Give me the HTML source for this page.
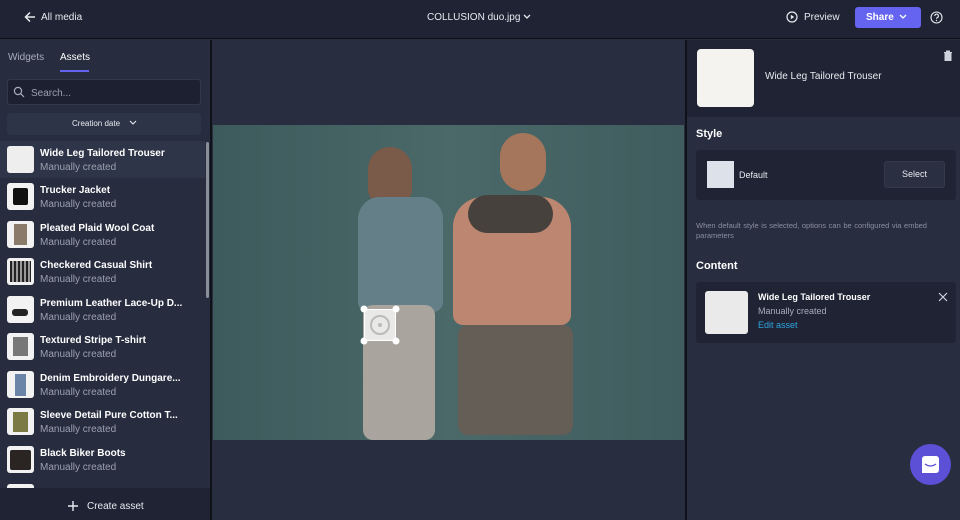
<!DOCTYPE html>
<html><head><meta charset="utf-8"><style>
*{box-sizing:border-box;margin:0;padding:0}
body{width:960px;height:520px;overflow:hidden;background:#282d40;font-family:"Liberation Sans",sans-serif;color:#e8eaf0;position:relative}
.top{position:absolute;left:0;top:0;width:960px;height:39px;background:#1f2333;border-bottom:1px solid #0e1018}
.abs{position:absolute}
.left{position:absolute;left:0;top:40px;width:212px;height:480px;background:#272c3f;border-right:2px solid #10121a}
.right{position:absolute;left:685px;top:40px;width:275px;height:480px;background:#282d40;border-left:2px solid #10121a}
.item{position:absolute;left:7px;width:200px;height:36px}
.item .th{position:absolute;left:0;top:2px;width:27px;height:27px;border-radius:3px;background:#f2f2f2}
.item .t{position:absolute;left:33px;top:4px;font-size:10px;font-weight:bold;color:#fff;white-space:nowrap}
.item .s{position:absolute;left:33px;top:18px;font-size:10px;color:#9ca1b0}
</style></head><body>
<div class="top">
 <svg class="abs" style="left:24px;top:11px" width="12" height="12" viewBox="0 0 12 12"><path d="M11 6H1.5M6 1.5L1.5 6 6 10.5" stroke="#e8eaf0" stroke-width="1.5" fill="none"/></svg>
 <div class="abs" style="left:41px;top:12px;font-size:10px">All media</div>
 <div class="abs" style="left:427px;top:12px;font-size:10px">COLLUSION duo.jpg</div>
 <svg class="abs" style="left:522px;top:13px" width="10" height="8"><path d="M2 2l3 3 3-3" stroke="#e8eaf0" stroke-width="1.3" fill="none"/></svg>
 <svg class="abs" style="left:786px;top:11px" width="12" height="12"><circle cx="6" cy="6" r="5" stroke="#e8eaf0" stroke-width="1.2" fill="none"/><path d="M4.8 3.8v4.4L8.2 6z" fill="#e8eaf0"/></svg>
 <div class="abs" style="left:804px;top:12px;font-size:10px">Preview</div>
 <div class="abs" style="left:855px;top:7px;width:66px;height:21px;background:#6464f0;border-radius:3px"></div>
 <div class="abs" style="left:866px;top:12px;font-size:10px;font-weight:bold;color:#fff">Share</div>
 <svg class="abs" style="left:898px;top:13px" width="10" height="8"><path d="M2 2l3 3 3-3" stroke="#fff" stroke-width="1.3" fill="none"/></svg>
 <svg class="abs" style="left:930px;top:11px" width="13" height="13"><circle cx="6.5" cy="6.5" r="5.5" stroke="#e8eaf0" stroke-width="1.1" fill="none"/><path d="M4.8 5a1.8 1.8 0 1 1 2.4 1.6c-.6.3-.7.6-.7 1.2" stroke="#e8eaf0" stroke-width="1.1" fill="none"/><circle cx="6.5" cy="9.5" r=".7" fill="#e8eaf0"/></svg>
</div>

<div class="left">
 <div class="abs" style="left:8px;top:12px;font-size:10px;color:#a8adbb">Widgets</div>
 <div class="abs" style="left:60px;top:12px;font-size:10px;color:#fff">Assets</div>
 <div class="abs" style="left:60px;top:30px;width:29px;height:2px;background:#6464f0"></div>
 <div class="abs" style="left:7px;top:39px;width:194px;height:26px;background:#1c2030;border:1px solid #33384a;border-radius:3px"></div>
 <svg class="abs" style="left:13px;top:46px" width="12" height="12"><circle cx="5" cy="5" r="3.6" stroke="#a8adbb" stroke-width="1.2" fill="none"/><path d="M7.7 7.7L11 11" stroke="#a8adbb" stroke-width="1.2"/></svg>
 <div class="abs" style="left:31px;top:48px;font-size:10px;color:#9ca1b0">Search...</div>
 <div class="abs" style="left:7px;top:73px;width:194px;height:22px;background:#2e3447;border-radius:3px"></div>
 <div class="abs" style="left:72px;top:79px;font-size:8px;color:#e8eaf0">Creation date</div>
 <svg class="abs" style="left:129px;top:80px" width="8" height="6"><path d="M1 1l3 3 3-3" stroke="#e8eaf0" stroke-width="1.1" fill="none"/></svg>
 <div class="abs" style="left:0;top:101px;width:205px;height:37px;background:#2f3548"></div>
 <div class="abs" style="left:206px;top:102px;width:3px;height:156px;background:#8a8e99;border-radius:2px"></div>
 <div class="item" style="top:104px"><div class="th" style="background:#eee"></div><div class="t">Wide Leg Tailored Trouser</div><div class="s">Manually created</div></div>
 <div class="item" style="top:141px"><div class="th"><div style="margin:5px 6px;width:15px;height:17px;background:#111;border-radius:2px"></div></div><div class="t">Trucker Jacket</div><div class="s">Manually created</div></div>
 <div class="item" style="top:179px"><div class="th"><div style="margin:3px 7px;width:13px;height:21px;background:#8a7a6a"></div></div><div class="t">Pleated Plaid Wool Coat</div><div class="s">Manually created</div></div>
 <div class="item" style="top:216px"><div class="th"><div style="margin:3px 3px;width:21px;height:21px;background:repeating-linear-gradient(90deg,#222 0 2px,#999 2px 4px)"></div></div><div class="t">Checkered Casual Shirt</div><div class="s">Manually created</div></div>
 <div class="item" style="top:254px"><div class="th"><div style="margin:13px 5px;width:16px;height:7px;background:#222;border-radius:3px"></div></div><div class="t">Premium Leather Lace-Up D...</div><div class="s">Manually created</div></div>
 <div class="item" style="top:291px"><div class="th"><div style="margin:4px 6px;width:15px;height:19px;background:#777"></div></div><div class="t">Textured Stripe T-shirt</div><div class="s">Manually created</div></div>
 <div class="item" style="top:329px"><div class="th"><div style="margin:3px 8px;width:11px;height:22px;background:#6a84a8"></div></div><div class="t">Denim Embroidery Dungare...</div><div class="s">Manually created</div></div>
 <div class="item" style="top:366px"><div class="th"><div style="margin:4px 6px;width:15px;height:20px;background:#7b7a44"></div></div><div class="t">Sleeve Detail Pure Cotton T...</div><div class="s">Manually created</div></div>
 <div class="item" style="top:404px"><div class="th"><div style="margin:4px 3px;width:21px;height:20px;background:#2a2522;border-radius:2px"></div></div><div class="t">Black Biker Boots</div><div class="s">Manually created</div></div>
 <div class="item" style="top:442px"><div class="th"></div></div>
 <div class="abs" style="left:0;top:448px;width:210px;height:32px;background:#1f2333"></div>
 <svg class="abs" style="left:67px;top:460px" width="12" height="12"><path d="M6 1v10M1 6h10" stroke="#e8eaf0" stroke-width="1.4"/></svg>
 <div class="abs" style="left:87px;top:461px;font-size:10px;color:#e8eaf0">Create asset</div>
</div>

<div class="abs" style="left:213px;top:125px;width:471px;height:315px;background:linear-gradient(90deg,#3d5a5c,#4b6969 50%,#3f5c5e);overflow:hidden">
 <div class="abs" style="left:155px;top:22px;width:44px;height:55px;background:#7a5a48;border-radius:22px 22px 12px 12px"></div>
 <div class="abs" style="left:145px;top:72px;width:85px;height:115px;background:#647f88;border-radius:22px 22px 10px 10px"></div>
 <div class="abs" style="left:150px;top:180px;width:72px;height:135px;background:#a9a59e;border-radius:10px"></div>
 <div class="abs" style="left:287px;top:8px;width:46px;height:58px;background:#a5765b;border-radius:23px"></div>
 <div class="abs" style="left:240px;top:72px;width:118px;height:128px;background:#bd8670;border-radius:30px 30px 10px 10px"></div>
 <div class="abs" style="left:255px;top:70px;width:85px;height:38px;background:#46413d;border-radius:20px"></div>
 <div class="abs" style="left:245px;top:200px;width:115px;height:110px;background:#645e57;border-radius:10px"></div>
 <div class="abs" style="left:151px;top:184px;width:32px;height:32px;background:#e9e9e7;border:1px solid #fff"></div>
 <svg class="abs" style="left:147px;top:180px" width="40" height="40"><circle cx="20" cy="20" r="9" stroke="#bbb" stroke-width="2" fill="none"/><circle cx="20" cy="20" r="2" fill="#bbb"/><circle cx="4" cy="4" r="3.5" fill="#fff"/><circle cx="36" cy="4" r="3.5" fill="#fff"/><circle cx="4" cy="36" r="3.5" fill="#fff"/><circle cx="36" cy="36" r="3.5" fill="#fff"/></svg>
</div>

<div class="right">
 <div class="abs" style="left:0;top:0;width:275px;height:77px;background:#1f2333"></div>
 <div class="abs" style="left:10px;top:9px;width:57px;height:58px;background:#f4f3ef;border-radius:4px"></div>
 <div class="abs" style="left:78px;top:31px;font-size:10px">Wide Leg Tailored Trouser</div>
 <svg class="abs" style="left:256px;top:10px" width="10" height="11"><path d="M1 2.5h8M3.5 2.5V1h3v1.5M2 3.5h6v7H2z" stroke="#cfd2da" stroke-width="1" fill="#cfd2da"/></svg>
 <div class="abs" style="left:9px;top:88px;font-size:11px;font-weight:bold;color:#fff">Style</div>
 <div class="abs" style="left:9px;top:110px;width:260px;height:50px;background:#1f2333;border-radius:3px"></div>
 <div class="abs" style="left:20px;top:121px;width:27px;height:27px;background:#dce1ea"></div>
 <div class="abs" style="left:52px;top:130px;font-size:9px">Default</div>
 <div class="abs" style="left:197px;top:121px;width:61px;height:27px;background:#2a2f42;border:1px solid #33384a;border-radius:3px;font-size:9px;text-align:center;line-height:25px">Select</div>
 <div class="abs" style="left:9px;top:181px;width:262px;font-size:7.5px;line-height:10px;color:#8a8fa0;word-spacing:0.5px">When default style is selected, options can be configured via embed parameters</div>
 <div class="abs" style="left:9px;top:220px;font-size:11px;font-weight:bold;color:#fff">Content</div>
 <div class="abs" style="left:9px;top:242px;width:260px;height:61px;background:#1f2333;border-radius:3px"></div>
 <div class="abs" style="left:18px;top:251px;width:43px;height:43px;background:#eaeaea;border-radius:3px"></div>
 <div class="abs" style="left:71px;top:252px;font-size:9px;font-weight:bold;color:#fff">Wide Leg Tailored Trouser</div>
 <div class="abs" style="left:71px;top:266px;font-size:9px;color:#a8adbb">Manually created</div>
 <div class="abs" style="left:71px;top:280px;font-size:9px;color:#2fa6e0">Edit asset</div>
 <svg class="abs" style="left:251px;top:252px" width="10" height="10"><path d="M1 1l8 8M9 1L1 9" stroke="#cfd2da" stroke-width="1.2"/></svg>
 <div class="abs" style="left:223px;top:404px;width:41px;height:41px;border-radius:50%;background:#5b50d6"></div>
 <div class="abs" style="left:235px;top:416px;width:17px;height:17px;background:#fff;border-radius:3px 3px 3px 0"></div>
 <svg class="abs" style="left:237px;top:423px" width="13" height="6"><path d="M1 1q5.5 4 11 0" stroke="#5b50d6" stroke-width="1.3" fill="none"/></svg>
</div>
</body></html>
